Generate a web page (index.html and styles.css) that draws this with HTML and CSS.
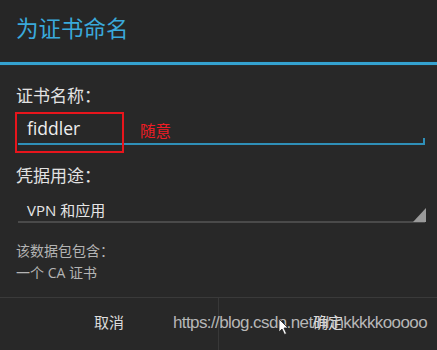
FILE: index.html
```html
<!DOCTYPE html>
<html lang="zh">
<head>
<meta charset="utf-8">
<link rel="stylesheet" href="styles.css">
</head>
<body>
<div class="dialog">
  <div class="title">为证书命名</div>
  <div class="title-line"></div>
  <div class="content">
    <div class="label">证书名称<span class="colon">：</span></div>
    <div class="field">
      <div class="input">fiddler</div>
      <div class="note-box"></div>
      <div class="note-text">随意</div>
    </div>
    <div class="label label2">凭据用途<span class="colon">：</span></div>
    <div class="spinner">VPN 和应用</div>
    <div class="info">该数据包包含<span class="colon">：</span><br>一个 CA 证书</div>
  </div>
  <div class="buttons">
    <div class="btn">取消</div>
    <div class="btn btn-right">确定</div>
  </div>
  <div class="watermark">https://blog.csdn.net/hhhkkkkkooooo</div>
  <svg class="cursor" width="12" height="18" viewBox="0 0 12 18"><path d="M1 1 L1 14 L4 11 L6.5 16.5 L8.5 15.5 L6 10 L10 10 Z" fill="#fff" stroke="#222" stroke-width="0.8"/></svg>
</div>
</body>
</html>
```
FILE: styles.css
```css
html, body {
  margin: 0;
  padding: 0;
  background: #282828;
}
.dialog {
  position: relative;
  width: 437px;
  height: 350px;
  overflow: hidden;
  background: #282828;
  font-family: "Open Sans", "Noto Sans CJK SC", sans-serif;
  display: flex;
  flex-direction: column;
}
.colon {
  font-family: "Noto Sans CJK TC", sans-serif;
}
.title {
  height: 62px;
  box-sizing: border-box;
  padding: 14px 0 0 16px;
  font-size: 22.5px;
  line-height: 30px;
  color: #3aa9db;
  background: #262626;
}
.title-line {
  height: 3px;
  background: #34a2d0;
  box-shadow: 0 0 1px #1a5e7c;
}
.content {
  padding: 0 12px 0 16px;
}
.label {
  margin-top: 18px;
  font-size: 17px;
  line-height: 24px;
  color: #e2e2e2;
}
.field {
  position: relative;
  margin-left: 2px;
}
.input {
  position: relative;
  padding: 8px 0 3px 9px;
  font-size: 17.5px;
  line-height: 24px;
  color: #eeeeee;
  border-bottom: 2px solid #2f8fb8;
}
.input::after {
  content: "";
  position: absolute;
  right: 0;
  bottom: 0;
  width: 2px;
  height: 5px;
  background: #2f8fb8;
}
.note-box {
  position: absolute;
  left: -3px;
  top: 4px;
  width: 105px;
  height: 37px;
  border: 2px solid #e8151c;
}
.note-text {
  position: absolute;
  left: 122px;
  top: 12px;
  font-size: 15.5px;
  line-height: 22px;
  color: #ee1c24;
}
.label2 {
  margin-top: 18px;
}
.spinner {
  position: relative;
  margin-left: 2px;
  padding: 11px 0 0 9px;
  font-size: 15px;
  line-height: 22px;
  color: #e6e6e6;
  border-bottom: 2px solid #4a4a4a;
}
.spinner::after {
  content: "";
  position: absolute;
  right: -1px;
  bottom: -1px;
  width: 13px;
  height: 14px;
  background: #9a9a9a;
  clip-path: polygon(100% 0, 100% 100%, 0 100%);
}
.info {
  margin-top: 16px;
  font-size: 14px;
  line-height: 22px;
  color: #b4b4b4;
  height: 58px;
}
.buttons {
  display: flex;
  border-top: 1px solid #3a3a3a;
  flex: 1;
}
.btn {
  flex: 1;
  text-align: center;
  padding-top: 13px;
  font-size: 15px;
  line-height: 22px;
  color: #dcdcdc;
}
.btn-right {
  border-left: 1px solid #383838;
}
.watermark {
  position: absolute;
  left: 173px;
  top: 311px;
  font-family: "Liberation Sans", Arial, sans-serif;
  font-size: 17px;
  letter-spacing: -0.6px;
  line-height: 24px;
  color: rgba(210, 210, 210, 0.85);
  white-space: nowrap;
}
.cursor {
  position: absolute;
  left: 278px;
  top: 318px;
}
```
